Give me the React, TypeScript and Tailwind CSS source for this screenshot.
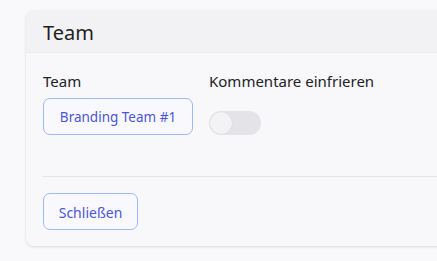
export default function App() {
  return (
    <div
      className="h-[261px] w-[437px] overflow-hidden bg-[#f9f9fb] pl-[26px] pt-[10px]"
      style={{ fontFamily: '"Noto Sans", sans-serif' }}
    >
      <div className="w-[480px] rounded-lg bg-[#f8f8fb] shadow-[0_1px_3px_rgba(0,0,0,0.12)]">
        <div className="flex h-[43px] items-center rounded-t-lg border-b border-[#ececf0] bg-[#f2f2f4] px-[17px] pt-[3px]">
          <h2 className="text-[20px] leading-none text-[#1f1f23]">Team</h2>
        </div>
        <div className="px-[17px] pt-[17px]">
          <div className="flex gap-[16px]">
            <div className="flex flex-col">
              <span className="text-[15px] leading-[22px] text-[#222226]">Team</span>
              <button className="mt-[6px] h-[37px] w-[150px] rounded-[7px] border border-[#9db8fb] bg-[#f9f9fd] pt-[1px] text-[13.5px] text-[#4b56d4]">
                Branding Team #1
              </button>
            </div>
            <div className="flex flex-col">
              <span className="text-[15px] leading-[22px] text-[#222226]">Kommentare einfrieren</span>
              <div className="mt-[19px] flex h-[24px] w-[52px] items-center rounded-full bg-[#e4e4e8] px-[1px]">
                <div className="h-[22px] w-[22px] rounded-full bg-[#f3f3f6] shadow-[0_0_1px_rgba(0,0,0,0.15)]" />
              </div>
            </div>
          </div>
          <div className="mt-[41px] border-t border-[#e3e3e8]" />
          <div className="pb-[16px] pt-[16px]">
            <button className="h-[37px] w-[95px] rounded-[7px] border border-[#9db8fb] bg-[#f9f9fd] pt-[1px] text-[14px] text-[#4b56d4]">
              Schließen
            </button>
          </div>
        </div>
      </div>
    </div>
  );
}
